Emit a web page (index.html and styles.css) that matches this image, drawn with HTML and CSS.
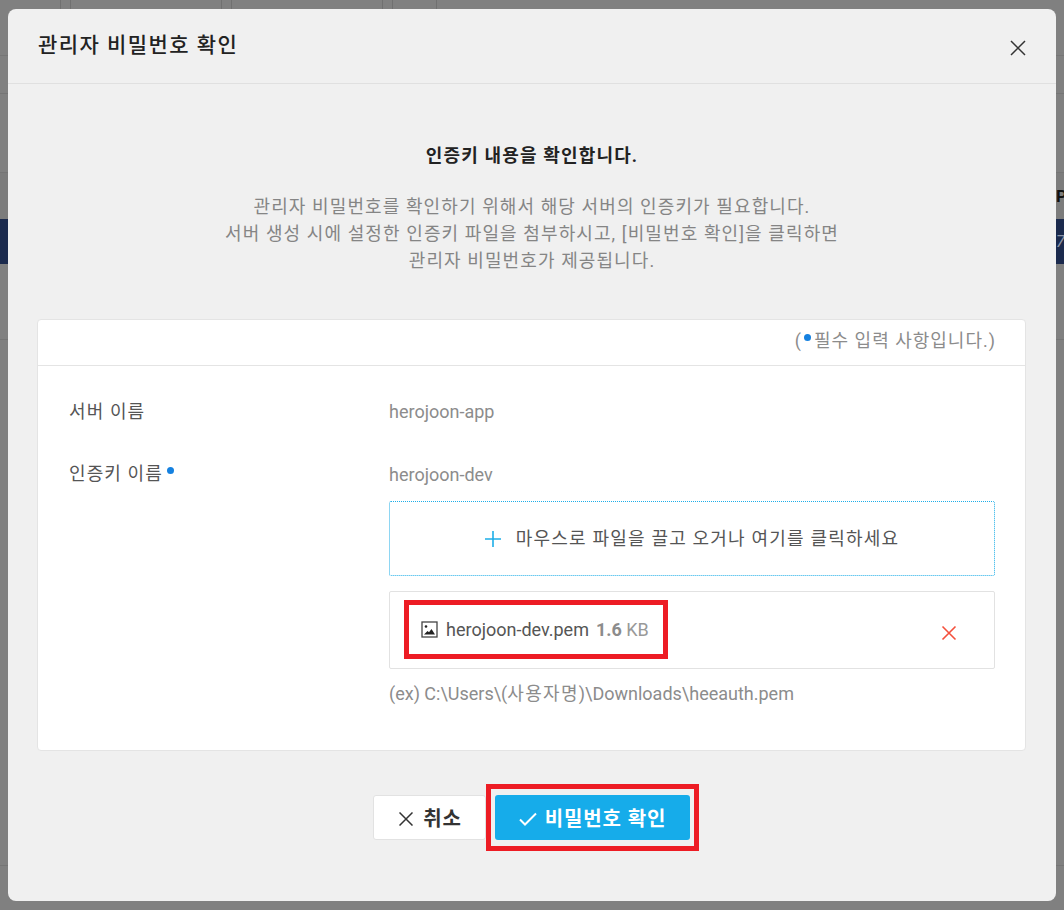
FILE: index.html
```html
<!DOCTYPE html>
<html lang="ko">
<head>
<meta charset="utf-8">
<title>관리자 비밀번호 확인</title>
<link rel="stylesheet" href="styles.css">
</head>
<body>
<div class="page">
  <div class="bg-tabs"><i></i><i></i><i></i><i></i><i></i><i></i><i></i></div>
  <div class="bg-row r1"></div>
  <div class="bg-row r2"></div>
  <div class="bg-head"><span class="bg-p">P</span></div>
  <div class="bg-navy"><span class="bg-seven">7</span></div>
  <div class="bg-row r3"></div>
  <div class="bg-row r4"></div>
</div>
<div class="modal">
  <header class="modal-head">
    <h1 class="modal-title">관리자 비밀번호 확인</h1>
    <button class="close" aria-label="닫기">
      <svg width="16" height="16" viewBox="0 0 16 16"><path d="M1 1l14 14M15 1L1 15" stroke="#333" stroke-width="1.5" fill="none"/></svg>
    </button>
  </header>
  <div class="modal-body">
    <div class="intro">
      <p class="lead">인증키 내용을 확인합니다.</p>
      <p class="desc">관리자 비밀번호를 확인하기 위해서 해당 서버의 인증키가 필요합니다.<br>서버 생성 시에 설정한 인증키 파일을 첨부하시고, [비밀번호 확인]을 클릭하면<br>관리자 비밀번호가 제공됩니다.</p>
    </div>
    <section class="card">
      <div class="card-top">(<span class="dot dot-note"></span>필수 입력 사항입니다.)</div>
      <div class="card-main">
        <div class="form-row row-server">
          <div class="label">서버 이름</div>
          <div class="value">herojoon-app</div>
        </div>
        <div class="form-row">
          <div class="label">인증키 이름<span class="dot dot-label"></span></div>
          <div class="field">
            <div class="value">herojoon-dev</div>
            <div class="drop">
              <svg class="plus" width="16" height="16" viewBox="0 0 16 16"><path d="M8 0v16M0 8h16" stroke="#1eaee8" stroke-width="1.6" fill="none"/></svg>
              <span class="drop-text">마우스로 파일을 끌고 오거나 여기를 클릭하세요</span>
            </div>
            <div class="file-box">
              <div class="file-mark">
                <svg class="file-icon" width="17" height="17" viewBox="0 0 17 17"><rect x="1" y="1" width="15" height="15" fill="#fff" stroke="#444" stroke-width="1.3"/><circle cx="5" cy="5.500" r="1.300" fill="#222"/><path d="M3 13.500l3.500-3.500 1.500 1.200L10.500 8l3.500 5.500z" fill="#222"/></svg>
                <span class="file-name">herojoon-dev.pem</span>
                <span class="file-size"><b>1.6</b> KB</span>
              </div>
              <svg class="remove" width="16" height="16" viewBox="0 0 16 16"><path d="M1.500 1.500l13 13M14.500 1.500l-13 13" stroke="#f4503c" stroke-width="1.600" fill="none"/></svg>
            </div>
            <div class="hint">(ex) C:\Users\(<span class="ko">사용자명</span>)\Downloads\heeauth.pem</div>
          </div>
        </div>
      </div>
    </section>
    <div class="actions">
      <button class="btn btn-cancel">
        <svg width="14" height="14" viewBox="0 0 14 14"><path d="M.5.5l13 13M13.500.5l-13 13" stroke="#333" stroke-width="1.500" fill="none"/></svg>
        취소
      </button>
      <div class="confirm-mark">
        <button class="btn btn-ok">
          <svg width="18" height="14" viewBox="0 0 18 14"><path d="M1 7.500l5 5L17 1.500" stroke="#fff" stroke-width="2" fill="none"/></svg>
          비밀번호 확인
        </button>
      </div>
    </div>
  </div>
</div>
</body>
</html>
```

FILE: styles.css
```css
* { box-sizing: border-box; }
html, body { margin: 0; height: 100%; }
body {
  position: relative;
  width: 1064px;
  height: 910px;
  overflow: hidden;
  background: #808080;
  font-family: Roboto, "Noto Sans CJK KR", sans-serif;
  color: #333;
}
.page { height: 910px; background: #808080; }
.bg-tabs {
  height: 56px;
  display: grid;
  grid-template-columns: 61px 10px 151px 10px 151px 10px 44px;
  border-bottom: 1px solid #767676;
}
.bg-tabs i { display: block; border-right: 1px solid #707070; }
.bg-row { border-bottom: 1px solid #757575; }
.r1 { height: 38px; }
.r2 { height: 79px; }
.bg-head { height: 46px; background: #7c7c7c; text-align: right; line-height: 46px; font-weight: 700; font-size: 17px; color: #111; overflow: hidden; }
.bg-p { margin-right: -3px; }
.bg-navy { height: 45px; background: #1b2a4d; text-align: right; line-height: 45px; font-size: 17px; color: #8b93a5; font-style: italic; }
.bg-seven { margin-right: -1px; }
.r3 { height: 76px; }
.r4 { height: 526px; }
.modal {
  position: absolute;
  left: 8px;
  top: 9px;
  width: 1048px;
  height: 892px;
  background: #f0f0f0;
  border-radius: 8px;
  display: flex;
  flex-direction: column;
}
.modal-head {
  height: 75px;
  flex: none;
  border-bottom: 1px solid #e0e0e0;
  position: relative;
  padding: 21px 30px 0;
}
.modal-title { margin: 0; font-size: 21px; line-height: 30px; font-weight: 500; letter-spacing: 1.45px; color: #222; }
.close {
  position: absolute;
  right: 30px;
  top: 31px;
  width: 16px;
  height: 16px;
  padding: 0;
  border: 0;
  background: none;
  display: block;
}
.close svg { display: block; }
.modal-body { padding: 0 30px; flex: 1; display: flex; flex-direction: column; }
.intro { text-align: center; padding-top: 59px; height: 235px; }
.lead { margin: 0; font-size: 18px; line-height: 26px; font-weight: 700; letter-spacing: 1.15px; color: #222; }
.desc { margin: 24px 0 0; font-size: 18px; line-height: 27px; letter-spacing: 1.1px; color: #858585; font-weight: 400; }
.card { background: #fff; border: 1px solid #e4e4e4; border-radius: 4px; height: 432px; margin-left: -1px; }
.card-top {
  height: 46px;
  border-bottom: 1px solid #e4e4e4;
  text-align: right;
  padding-right: 29px;
  font-size: 18px;
  line-height: 42px;
  letter-spacing: 1px;
  color: #8c8c8c;
  font-weight: 400;
}
.dot { display: inline-block; width: 7px; height: 7px; border-radius: 50%; background: #1581e0; vertical-align: top; }
.dot-note { margin: 14px 3px 0 2px; }
.card-main { padding: 0 30px 0 31px; }
.form-row { display: flex; }
.row-server { height: 95px; padding-top: 33px; }
.label { width: 320px; flex: none; font-size: 18px; line-height: 26px; letter-spacing: 1.1px; color: #555; font-weight: 400; }
.dot-label { margin: 6px 0 0 4px; }
.value { font-size: 18px; line-height: 26px; color: #8c8c8c; height: 26px; }
.field { flex: 1; padding-top: 1px; }
.drop {
  margin-top: 13px;
  height: 75px;
  border: 1px dotted #1eaee8;
  border-radius: 2px;
  display: flex;
  align-items: center;
  justify-content: center;
  gap: 14px;
  font-size: 18px;
  letter-spacing: 1.2px;
  color: #555;
  font-weight: 400;
}
.drop-text { margin-top: -3px; margin-left: 1px; }
.file-box {
  margin-top: 15px;
  height: 78px;
  border: 1px solid #e2e2e2;
  border-radius: 2px;
  display: flex;
  align-items: center;
  justify-content: space-between;
  padding: 0 37px 0 14px;
  position: relative;
}
.file-mark {
  height: 59px;
  margin-bottom: 1px;
  border: 5px solid #ed1c24;
  width: 264px;
  display: flex;
  align-items: center;
  padding-left: 12px;
  font-size: 18px;
  color: #555;
}
.file-icon { flex: none; margin-right: 8px; }
.file-size { margin-left: 7px; color: #999; }
.file-size b { font-weight: 700; color: #8c8c8c; }
.remove { margin-top: 6px; }
.hint { margin-top: 12px; font-size: 18px; line-height: 26px; color: #8c8c8c; }
.ko { letter-spacing: 1.3px; }
.actions { display: flex; justify-content: center; align-items: flex-start; padding-top: 33px; margin-left: 8px; }
.btn { font-family: inherit; display: flex; align-items: center; justify-content: center; font-size: 20px; font-weight: 700; letter-spacing: .9px; border-radius: 3px; padding: 0; }
.btn svg { flex: none; margin-top: 3px; }
.btn-cancel { width: 113px; height: 45px; margin-top: 11px; padding-left: 2px; background: #fff; border: 1px solid #e2e2e2; color: #333; gap: 10px; }
.confirm-mark { border: 5px solid #ed1c24; padding: 6px 3px 6px 4px; width: 213px; height: 67px; }
.btn-ok { width: 195px; height: 45px; background: #16acea; border: 0; color: #fff; gap: 8px; }
```
